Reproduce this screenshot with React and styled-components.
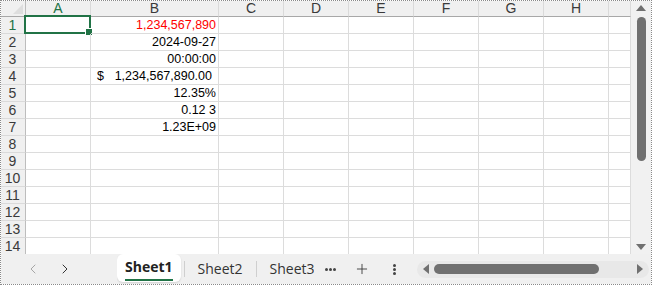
import React from "react";
import styled, { createGlobalStyle } from "styled-components";
import { ChevronLeft, ChevronRight, Plus } from "lucide-react";

const GlobalStyle = createGlobalStyle`
  html, body { margin: 0; padding: 0; background: #fff; }
  * { box-sizing: border-box; }
`;

const COLS = ["A", "B", "C", "D", "E", "F", "G", "H", ""];
const WIDTHS = "25px 65px 128px 65px 65px 65px 65px 65px 65px 22px";

const DATA = {
  1: { text: "1,234,567,890", red: true },
  2: { text: "2024-09-27" },
  3: { text: "00:00:00" },
  4: { accounting: true, text: "1,234,567,890.00" },
  5: { text: "12.35%" },
  6: { text: "0.12 3" },
  7: { text: "1.23E+09" },
};

const Frame = styled.div`
  width: 652px;
  height: 285px;
  border: 1px dotted #8a8a8a;
  display: grid;
  grid-template-columns: 630px 20px;
  grid-template-rows: 253px 30px;
  overflow: hidden;
  font-family: "Liberation Sans", Arial, sans-serif;
`;

const Sheet = styled.div`
  display: grid;
  grid-template-columns: ${WIDTHS};
  grid-template-rows: 16px repeat(14, 17px);
  overflow: hidden;
  width: 630px;
`;

const Corner = styled.div`
  background: #f0f0f0;
  border-right: 1px solid #bdbdbd;
  border-bottom: 1px solid #a8a8a8;
  position: relative;
  &::after {
    content: "";
    position: absolute;
    right: 2px;
    bottom: 2px;
    border-left: 10px solid transparent;
    border-bottom: 10px solid #dedede;
  }
`;

const ColHead = styled.div`
  background: #f0f0f0;
  border-right: 1px solid #dadada;
  border-bottom: 1px solid #a8a8a8;
  color: ${(p) => (p.$active ? "#217346" : "#3a3a3a")};
  font-size: 14px;
  line-height: 15px;
  text-align: center;
`;

const RowHead = styled.div`
  background: #f0f0f0;
  border-right: 1px solid #bdbdbd;
  border-bottom: 1px solid #dadada;
  color: ${(p) => (p.$active ? "#217346" : "#3a3a3a")};
  font-size: 14px;
  line-height: 16px;
  text-align: center;
  padding-right: 1px;
`;

const Cell = styled.div`
  position: relative;
  border-right: 1px solid #dcdcdc;
  border-bottom: 1px solid #dcdcdc;
  display: flex;
  align-items: center;
  justify-content: ${(p) => (p.$split ? "space-between" : "flex-end")};
  padding: ${(p) => (p.$split ? "0 6px 0 6px" : "0 2px 0 2px")};
  font-size: 12.5px;
  color: ${(p) => (p.$red ? "#ff0000" : "#000")};
  white-space: pre;
`;

const Selection = styled.div`
  position: absolute;
  left: -2px;
  top: -2px;
  right: -1px;
  bottom: -1px;
  border: 2px solid #217346;
  pointer-events: none;
  &::after {
    content: "";
    position: absolute;
    right: -4px;
    bottom: -4px;
    width: 6px;
    height: 6px;
    background: #217346;
    border: 1px solid #fff;
  }
`;

const VScroll = styled.div`
  background: #f1f1f1;
  display: flex;
  flex-direction: column;
  align-items: center;
  padding: 4px 0 4px 0;
`;

const Arrow = styled.div`
  width: 0;
  height: 0;
  border-left: ${(p) => (p.$dir === "up" || p.$dir === "down" ? "5px solid transparent" : p.$dir === "right" ? "6px solid #707070" : "0")};
  border-right: ${(p) => (p.$dir === "up" || p.$dir === "down" ? "5px solid transparent" : p.$dir === "left" ? "6px solid #707070" : "0")};
  border-top: ${(p) => (p.$dir === "left" || p.$dir === "right" ? "5px solid transparent" : p.$dir === "down" ? "6px solid #707070" : "0")};
  border-bottom: ${(p) => (p.$dir === "left" || p.$dir === "right" ? "5px solid transparent" : p.$dir === "up" ? "6px solid #707070" : "0")};
`;

const VThumb = styled.div`
  width: 9px;
  height: 144px;
  margin-top: 6px;
  border-radius: 5px;
  background: #707070;
`;

const Spacer = styled.div`
  flex: 1;
`;

const BottomBar = styled.div`
  grid-column: 1 / span 2;
  background: #f0f0f0;
  display: flex;
  align-items: center;
  height: 30px;
`;

const NavBtn = styled.div`
  width: 32px;
  display: flex;
  justify-content: center;
  color: ${(p) => (p.$disabled ? "#a6a6a6" : "#333")};
`;

const Tabs = styled.div`
  display: flex;
  align-items: center;
  margin-left: 36px;
  width: 197px;
  overflow: hidden;
  height: 100%;
`;

const Tab = styled.div`
  font-family: "Open Sans", "Noto Sans", sans-serif;
  font-size: 14px;
  font-weight: ${(p) => (p.$active ? 700 : 400)};
  color: ${(p) => (p.$active ? "#222" : "#333")};
  padding: ${(p) => (p.$active ? "0 8px" : "0 10px")};
  height: ${(p) => (p.$active ? "28px" : "auto")};
  align-self: ${(p) => (p.$active ? "flex-start" : "center")};
  background: ${(p) => (p.$active ? "#fff" : "transparent")};
  border-radius: 6px;
  box-shadow: ${(p) => (p.$active ? "0 1px 2px rgba(0,0,0,0.12)" : "none")};
  display: flex;
  flex-direction: column;
  align-items: center;
  justify-content: center;
  white-space: nowrap;
  flex-shrink: 0;
  span {
    line-height: 18px;
    padding-bottom: ${(p) => (p.$active ? "3px" : "0")};
    border-bottom: ${(p) => (p.$active ? "2px solid #217346" : "0")};
    margin-top: ${(p) => (p.$active ? "3px" : "0")};
  }
`;

const Divider = styled.div`
  width: 1px;
  height: 16px;
  background: #cfcfcf;
  margin: 0 3px;
  flex-shrink: 0;
`;

const ToolBtn = styled.div`
  width: 32px;
  display: flex;
  justify-content: center;
  align-items: center;
  color: #333;
  font-size: 14px;
`;

const Dots = styled.div`
  display: flex;
  gap: 1px;
  flex-direction: ${(p) => (p.$vertical ? "column" : "row")};
  i {
    width: 3px;
    height: 3px;
    border-radius: 50%;
    background: #444;
    display: block;
  }
`;

const HScroll = styled.div`
  margin-left: 7px;
  width: 232px;
  height: 17px;
  border-radius: 9px;
  background: #e8e8e8;
  display: flex;
  align-items: center;
  padding: 0 6px 0 6px;
  gap: 5px;
`;

const HThumb = styled.div`
  width: 165px;
  height: 10px;
  border-radius: 5px;
  background: #707070;
`;

export default function App() {
  const rows = Array.from({ length: 14 }, (_, i) => i + 1);
  return (
    <>
      <GlobalStyle />
      <Frame>
        <Sheet>
          <Corner />
          {COLS.map((c, i) => (
            <ColHead key={i} $active={c === "A"}>
              {c}
            </ColHead>
          ))}
          {rows.map((r) => (
            <React.Fragment key={r}>
              <RowHead $active={r === 1}>{r}</RowHead>
              {COLS.map((c, ci) => {
                const d = c === "B" ? DATA[r] : null;
                if (d && d.accounting) {
                  return (
                    <Cell key={ci} $split>
                      <span>$</span>
                      <span>{d.text}</span>
                    </Cell>
                  );
                }
                return (
                  <Cell key={ci} $red={d && d.red}>
                    {d ? d.text : ""}
                    {r === 1 && c === "A" && <Selection />}
                  </Cell>
                );
              })}
            </React.Fragment>
          ))}
        </Sheet>
        <VScroll>
          <Arrow $dir="up" />
          <VThumb />
          <Spacer />
          <Arrow $dir="down" />
        </VScroll>
        <BottomBar>
          <NavBtn $disabled style={{ marginLeft: 16 }}>
            <ChevronLeft size={16} strokeWidth={1.5} />
          </NavBtn>
          <NavBtn>
            <ChevronRight size={16} strokeWidth={1.5} />
          </NavBtn>
          <Tabs>
            <Tab $active>
              <span>Sheet1</span>
            </Tab>
            <Divider />
            <Tab>
              <span>Sheet2</span>
            </Tab>
            <Divider />
            <Tab>
              <span>Sheet3</span>
            </Tab>
          </Tabs>
          <ToolBtn>
            <Dots>
              <i />
              <i />
              <i />
            </Dots>
          </ToolBtn>
          <ToolBtn>
            <Plus size={16} strokeWidth={1.3} />
          </ToolBtn>
          <ToolBtn>
            <Dots $vertical>
              <i />
              <i />
              <i />
            </Dots>
          </ToolBtn>
          <HScroll>
            <Arrow $dir="left" />
            <HThumb />
            <Spacer />
            <Arrow $dir="right" />
          </HScroll>
        </BottomBar>
      </Frame>
    </>
  );
}
